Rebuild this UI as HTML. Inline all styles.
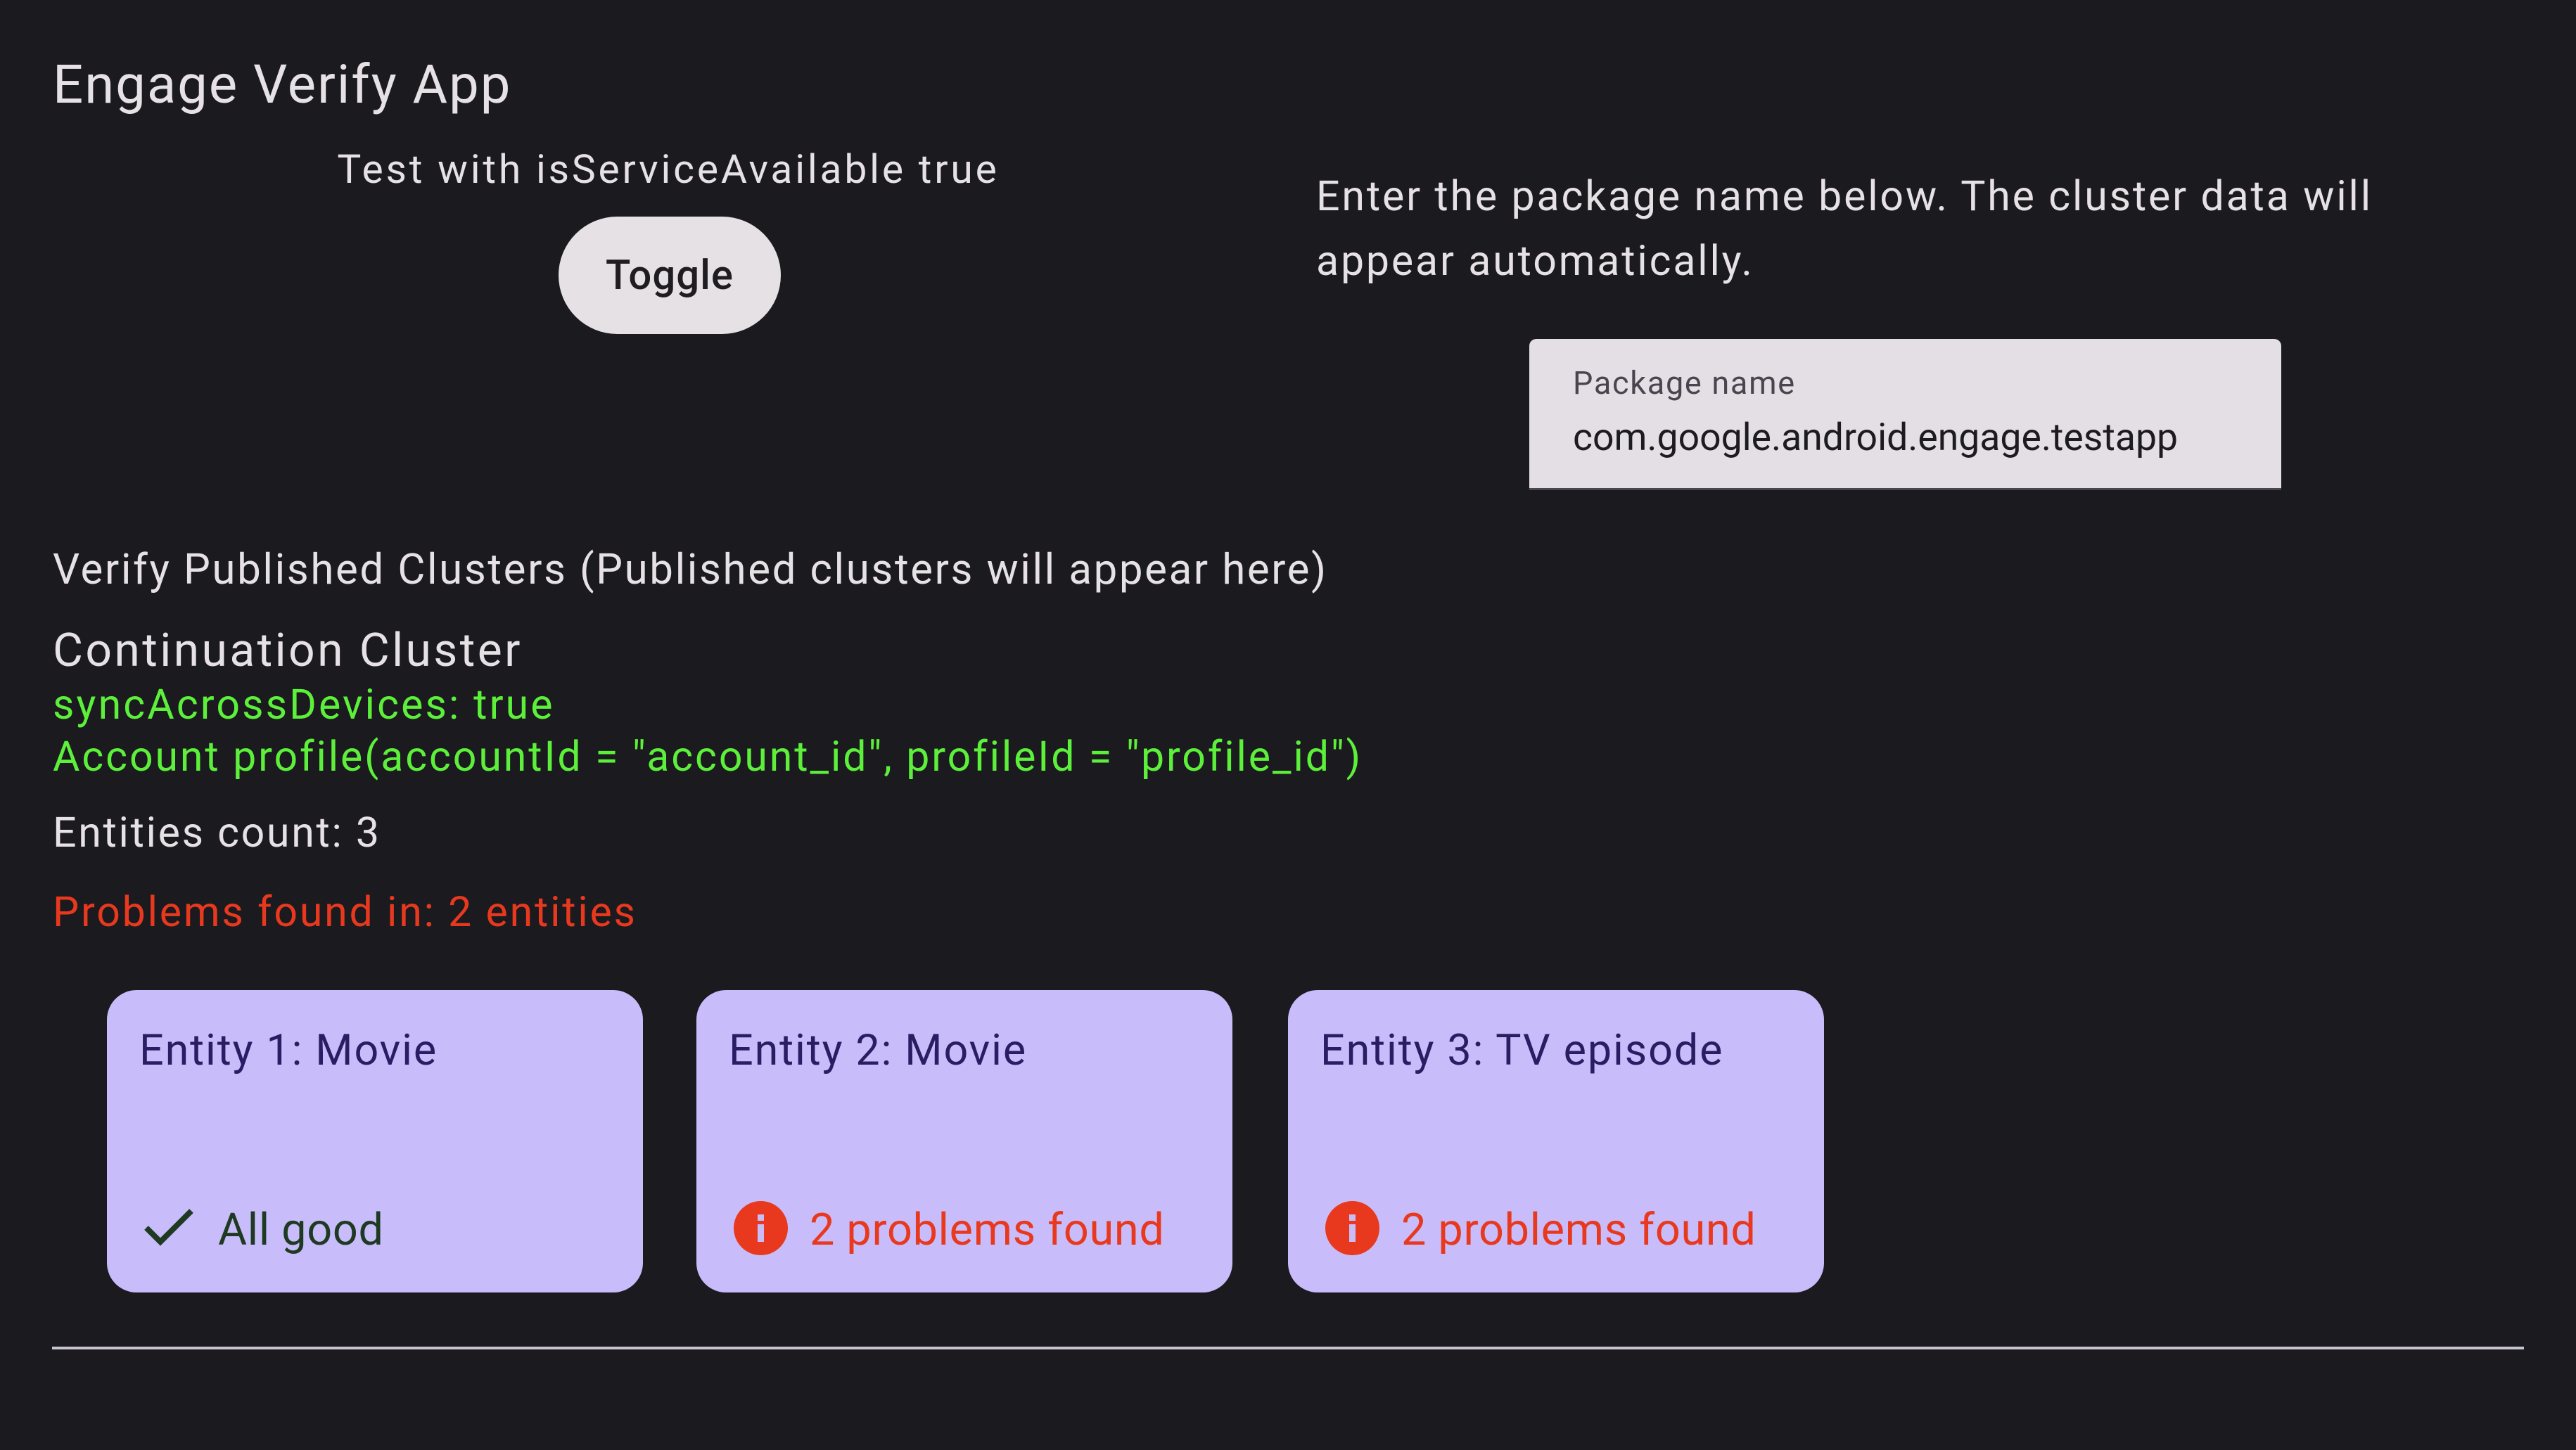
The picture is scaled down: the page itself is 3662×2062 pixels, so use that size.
<!DOCTYPE html>
<html><head><meta charset="utf-8"><style>
html,body{margin:0;padding:0}
body{width:3662px;height:2062px;background:#1b1a1f;position:relative;overflow:hidden;font-family:"Roboto","Liberation Sans",sans-serif;color:#e6e1e5}
.a{position:absolute;white-space:nowrap;line-height:1}
.card{position:absolute;top:1408px;width:762px;height:430px;background:#c8bdfa;border-radius:42px}
.ct{position:absolute;left:46px;top:55px;font-size:61px;color:#2b1d64;white-space:nowrap;line-height:1;letter-spacing:1.9px}
.cb{position:absolute;left:161px;top:310px;font-size:63px;color:#e8391e;white-space:nowrap;line-height:1;letter-spacing:0.7px}
.ic{position:absolute;left:53px;top:300px;width:77px;height:77px;border-radius:50%;background:#e8391e}
.ic:before{content:"";position:absolute;left:34px;top:19px;width:9px;height:9px;background:#c8bdfa}
.ic:after{content:"";position:absolute;left:34px;top:33px;width:9px;height:25px;background:#c8bdfa}
</style></head><body>
<div class="a" style="left:75px;top:82px;font-size:76px;letter-spacing:2px">Engage Verify App</div>
<div class="a" style="left:450px;width:1000px;text-align:center;top:212px;font-size:57px;letter-spacing:3.8px">Test with isServiceAvailable true</div>
<div class="a" style="left:794px;top:308px;width:316px;height:167px;border-radius:84px;background:#e6e1e5;color:#1f1d22;font-size:58px;font-weight:500;letter-spacing:1px;display:flex;align-items:center;justify-content:center">Toggle</div>
<div class="a" style="left:1871px;top:234px;font-size:59px;line-height:92px;white-space:normal;width:1530px;letter-spacing:2.85px">Enter the package name below. The cluster data will appear automatically.</div>
<div class="a" style="left:2174px;top:482px;width:1069px;height:212px;background:#e4dee5;border-radius:10px 10px 0 0;border-bottom:3px solid #4a4650"></div>
<div class="a" style="left:2236px;top:522px;font-size:45px;color:#49454f;letter-spacing:1.7px">Package name</div>
<div class="a" style="left:2236px;top:596px;font-size:53.5px;color:#1d1b20">com.google.android.engage.testapp</div>
<div class="a" style="left:75px;top:780px;font-size:60px;letter-spacing:2.6px">Verify Published Clusters (Published clusters will appear here)</div>
<div class="a" style="left:75px;top:893px;font-size:66px;letter-spacing:3.4px">Continuation Cluster</div>
<div class="a" style="left:75px;top:973px;font-size:59px;color:#5cf03a;letter-spacing:3.1px">syncAcrossDevices: true</div>
<div class="a" style="left:75px;top:1047px;font-size:59px;color:#5cf03a;letter-spacing:2.9px">Account profile(accountId = "account_id", profileId = "profile_id")</div>
<div class="a" style="left:75px;top:1155px;font-size:59px;letter-spacing:2.7px">Entities count: 3</div>
<div class="a" style="left:75px;top:1268px;font-size:59px;color:#e8391e;letter-spacing:2.8px">Problems found in: 2 entities</div>
<div class="card" style="left:152px"><div class="ct">Entity 1: Movie</div>
<svg style="position:absolute;left:52px;top:310px" width="72" height="55" viewBox="0 0 72 55"><path d="M4 28 L24 48 L68 4" fill="none" stroke="#1f3a22" stroke-width="8"/></svg>
<div class="cb" style="left:158px;color:#1f3a22">All good</div></div>
<div class="card" style="left:990px"><div class="ct">Entity 2: Movie</div><div class="ic"></div><div class="cb">2 problems found</div></div>
<div class="card" style="left:1831px"><div class="ct">Entity 3: TV episode</div><div class="ic"></div><div class="cb">2 problems found</div></div>
<div class="a" style="left:74px;top:1915px;width:3514px;height:4px;background:#cac4d0"></div>
</body></html>
